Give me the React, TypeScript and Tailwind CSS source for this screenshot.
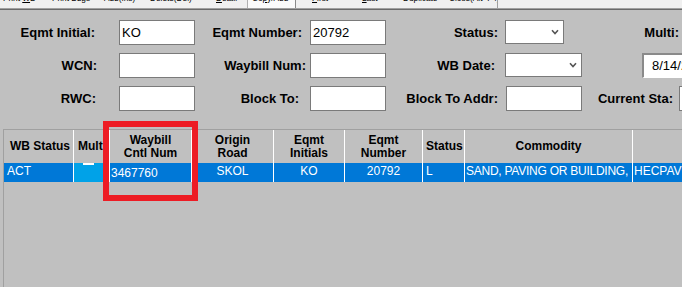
import React from "react";

const Chevron = () => (
  <svg width="8" height="6" viewBox="0 0 8 6" className="shrink-0">
    <polyline points="1,1.2 4,4.5 7,1.2" fill="none" stroke="#555" strokeWidth="1.6" />
  </svg>
);

const Input = ({ w, value }: { w: string; value?: string }) => (
  <div className={`${w} h-[25px] shrink-0 bg-white border border-[#7a7a7a] flex items-center pl-[2px] text-[13px] font-normal text-black`}>
    {value}
  </div>
);

const Label = ({ w, pr, text }: { w: string; pr: string; text: string }) => (
  <div className={`${w} ${pr} shrink-0 text-right text-[13px] font-bold text-black whitespace-nowrap`}>{text}</div>
);

export default function App() {
  return (
    <div className="w-[682px] h-[287px] overflow-hidden bg-[#c0c0c0] relative font-['Liberation_Sans',Arial,sans-serif] text-black">
      {/* toolbar strip (mostly scrolled off) */}
      <div className="h-[8px] bg-[#f0f0f0] overflow-hidden flex items-start pl-[3px] text-[8.25px] leading-[10px] text-black whitespace-nowrap">
        <div className="w-[49px] shrink-0 mt-[-6px]">Print <span className="underline">W</span>B</div>
        <div className="w-[52px] shrink-0 mt-[-6px]">Print Bdgs</div>
        <div className="w-[46px] shrink-0 mt-[-6px]">Add(Ins)</div>
        <div className="w-[66px] shrink-0 mt-[-6px]">Delete(Del)</div>
        <div className="w-[31px] shrink-0 mt-[-6px]"><span className="underline">D</span>etail</div>
        <div className="w-[49px] shrink-0 h-[8px] bg-[#fafafa] border-l border-[#b0b0b0] border-r border-r-[#8a8a8a] pl-[4px] overflow-hidden">
          <div className="mt-[-6px]">Co<span className="underline">p</span>y/Add</div>
        </div>
        <div className="w-[50px] ml-[16px] shrink-0 mt-[-6px]"><span className="underline">F</span>irst</div>
        <div className="w-[41px] shrink-0 mt-[-6px]"><span className="underline">L</span>ast</div>
        <div className="w-[46px] shrink-0 mt-[-6px]">Duplicate</div>
        <div className="w-[49px] shrink-0 h-[8px] border-r border-[#a0a0a0] overflow-hidden">
          <div className="mt-[-6px]">Close(Alt+F4)</div>
        </div>
      </div>
      <div className="h-[1px] bg-[#a0a0a0]" />
      <div className="h-[1px] bg-[#6a6a6a]" />

      {/* form */}
      <div className="pt-[10px] flex flex-col gap-[8px]">
        <div className="flex items-center h-[25px]">
          <Label w="w-[119px]" pr="pr-[24px]" text="Eqmt Initial:" />
          <Input w="w-[76px]" value="KO" />
          <Label w="w-[115px]" pr="pr-[8px]" text="Eqmt Number:" />
          <Input w="w-[76px]" value="20792" />
          <Label w="w-[119px]" pr="pr-[7px]" text="Status:" />
          <div className="w-[59px] h-[24px] self-start shrink-0 bg-white border border-[#7a7a7a] flex items-center justify-end pr-[4px]">
            <Chevron />
          </div>
          <Label w="w-[118px]" pr="pr-[3px]" text="Multi:" />
        </div>
        <div className="flex items-center h-[25px]">
          <Label w="w-[119px]" pr="pr-[22px]" text="WCN:" />
          <Input w="w-[76px]" />
          <Label w="w-[115px]" pr="pr-[4px]" text="Waybill Num:" />
          <Input w="w-[76px]" />
          <Label w="w-[119px]" pr="pr-[10px]" text="WB Date:" />
          <div className="w-[77px] h-[24px] self-start shrink-0 bg-white border border-[#7a7a7a] flex items-center justify-end pr-[4px]">
            <Chevron />
          </div>
          <div className="w-[60px] shrink-0" />
          <div className="w-[90px] h-[25px] shrink-0 bg-white border-t-2 border-l-2 border-t-[#8a8a8a] border-l-[#8a8a8a] border-b border-r border-b-white border-r-white flex items-center pl-[8px] text-[13px] whitespace-nowrap">
            8/14/2019
          </div>
        </div>
        <div className="flex items-center h-[25px]">
          <Label w="w-[119px]" pr="pr-[23px]" text="RWC:" />
          <Input w="w-[76px]" />
          <Label w="w-[115px]" pr="pr-[11px]" text="Block To:" />
          <Input w="w-[76px]" />
          <Label w="w-[120px]" pr="pr-[8px]" text="Block To Addr:" />
          <Input w="w-[76px]" />
          <Label w="w-[97px]" pr="pr-[6px]" text="Current Sta:" />
          <Input w="w-[40px]" />
        </div>
      </div>

      {/* grid */}
      <div className="mt-[18px] ml-[3px] h-[200px] border-t border-l border-[#a0a0a0] overflow-hidden">
        <div className="flex h-[33px] text-[12px] leading-[13px] font-bold text-black">
          <div className="w-[70px] shrink-0 border-r border-white flex items-center pl-[6px] whitespace-nowrap">WB Status</div>
          <div className="w-[36px] shrink-0 border-r border-white flex items-center pl-[4px] whitespace-nowrap overflow-hidden">Multi</div>
          <div className="w-[82px] shrink-0 border-r border-white flex items-center justify-center text-center">Waybill<br />Cntl Num</div>
          <div className="w-[82px] shrink-0 border-r border-white flex items-center justify-center text-center">Origin<br />Road</div>
          <div className="w-[71px] shrink-0 border-r border-white flex items-center justify-center text-center">Eqmt<br />Initials</div>
          <div className="w-[78px] shrink-0 border-r border-white flex items-center justify-center text-center">Eqmt<br />Number</div>
          <div className="w-[42px] shrink-0 border-r border-white flex items-center pl-[3px]">Status</div>
          <div className="w-[168px] shrink-0 border-r border-white flex items-center justify-center">Commodity</div>
          <div className="w-[120px] shrink-0" />
        </div>
        <div className="flex h-[19px] text-[12px] leading-[14px] text-white">
          <div className="w-[70px] shrink-0 bg-[#0078d7] border-r border-white pl-[3px] pt-[1px]">ACT</div>
          <div className="w-[36px] shrink-0 bg-[#00a2e8] border-r border-white flex flex-col">
            <div className="ml-[9px] w-[11px] h-[2px] bg-white" />
          </div>
          <div className="w-[82px] shrink-0 bg-[#0078d7] border-r border-white pl-[1px] pt-[3px]">3467760</div>
          <div className="w-[82px] shrink-0 bg-[#0078d7] border-r border-white text-center pt-[1px]">SKOL</div>
          <div className="w-[71px] shrink-0 bg-[#0078d7] border-r border-white text-center pt-[1px]">KO</div>
          <div className="w-[78px] shrink-0 bg-[#0078d7] border-r border-white text-center pt-[1px]">20792</div>
          <div className="w-[42px] shrink-0 bg-[#0078d7] border-r border-white pl-[3px] pt-[1px]">L</div>
          <div className="w-[168px] shrink-0 bg-[#0078d7] border-r border-white pl-[1px] pt-[1px] whitespace-nowrap overflow-hidden tracking-[-0.25px]">SAND, PAVING OR BUILDING,</div>
          <div className="w-[120px] shrink-0 bg-[#0078d7] pl-[1px] pt-[1px] whitespace-nowrap">HECPAV</div>
        </div>
      </div>

      {/* red annotation box */}
      <div className="absolute left-[103px] top-[121px] w-[95px] h-[80px] border-[6px] border-[#ed1c24]" />
    </div>
  );
}
